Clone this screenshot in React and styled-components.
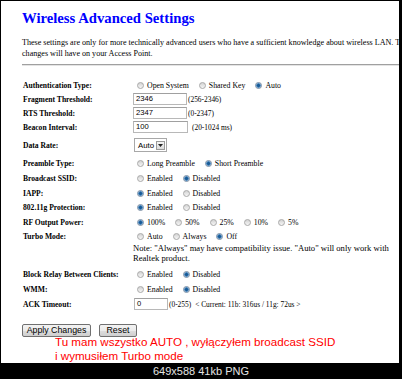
import styled, { createGlobalStyle } from "styled-components"

const Global = createGlobalStyle`
  html, body { margin:0; padding:0; background:#000; }
  body { width:402px; height:379px; overflow:hidden; }
`

function Radio({ on, children }) {
  return (
    <Choice>
      <Dot $on={on} />
      {children}
    </Choice>
  )
}

function App() {
  return (
    <>
      <Global />
      <Screen>
        <Panel>
          <Title>Wireless Advanced Settings</Title>
          <Intro>
            These settings are only for more technically advanced users who have a sufficient knowledge about wireless LAN. This
            <br />
            changes will have on your Access Point.
          </Intro>
          <Rule />
          <Form>
            <Row $h={14}>
              <Label>Authentication Type:</Label>
              <Field>
                <Radio>Open System</Radio>
                <Radio>Shared Key</Radio>
                <Radio on>Auto</Radio>
              </Field>
            </Row>
            <Row $h={14}>
              <Label>Fragment Threshold:</Label>
              <Field>
                <TextBox $w={54}>2346</TextBox>
                <Hint>(256-2346)</Hint>
              </Field>
            </Row>
            <Row $h={14}>
              <Label>RTS Threshold:</Label>
              <Field>
                <TextBox $w={54}>2347</TextBox>
                <Hint>(0-2347)</Hint>
              </Field>
            </Row>
            <Row $h={14}>
              <Label>Beacon Interval:</Label>
              <Field>
                <TextBox $w={55}>100</TextBox>
                <Hint $gap={4}>(20-1024 ms)</Hint>
              </Field>
            </Row>
            <Row $h={22}>
              <Label>Data Rate:</Label>
              <Field>
                <Select>
                  Auto
                  <Arrow>
                    <svg width="5" height="3" viewBox="0 0 5 3">
                      <path d="M0 0H5L2.5 3Z" fill="#222" />
                    </svg>
                  </Arrow>
                </Select>
              </Field>
            </Row>
            <Row $h={14}>
              <Label>Preamble Type:</Label>
              <Field>
                <Radio>Long Preamble</Radio>
                <Radio on>Short Preamble</Radio>
              </Field>
            </Row>
            <Row $h={16}>
              <Label>Broadcast SSID:</Label>
              <Field>
                <Radio>Enabled</Radio>
                <Radio on>Disabled</Radio>
              </Field>
            </Row>
            <Row $h={14}>
              <Label>IAPP:</Label>
              <Field>
                <Radio on>Enabled</Radio>
                <Radio>Disabled</Radio>
              </Field>
            </Row>
            <Row $h={15}>
              <Label>802.11g Protection:</Label>
              <Field>
                <Radio on>Enabled</Radio>
                <Radio>Disabled</Radio>
              </Field>
            </Row>
            <Row $h={14}>
              <Label>RF Output Power:</Label>
              <Field>
                <Radio on>100%</Radio>
                <Radio>50%</Radio>
                <Radio>25%</Radio>
                <Radio>10%</Radio>
                <Radio>5%</Radio>
              </Field>
            </Row>
            <Row $h={14}>
              <Label>Turbo Mode:</Label>
              <Field>
                <Radio>Auto</Radio>
                <Radio>Always</Radio>
                <Radio on>Off</Radio>
              </Field>
            </Row>
            <Row $h={19}>
              <span />
              <Note>
                Note: "Always" may have compatibility issue. "Auto" will only work with
                <br />
                Realtek product.
              </Note>
            </Row>
            <Row $h={15} $top={5}>
              <Label>Block Relay Between Clients:</Label>
              <Field>
                <Radio>Enabled</Radio>
                <Radio on>Disabled</Radio>
              </Field>
            </Row>
            <Row $h={14}>
              <Label>WMM:</Label>
              <Field>
                <Radio>Enabled</Radio>
                <Radio on>Disabled</Radio>
              </Field>
            </Row>
            <Row $h={16}>
              <Label>ACK Timeout:</Label>
              <Field>
                <TextBox $w={34} $left={1}>0</TextBox>
                <Hint $gap={1}>(0-255)</Hint>
                <Hint $gap={4}>&lt; Current: 11b: 316us / 11g: 72us &gt;</Hint>
              </Field>
            </Row>
          </Form>
          <Actions>
            <Button $w={69}>Apply Changes</Button>
            <Button $w={38}>Reset</Button>
          </Actions>
          <Remark>
            Tu mam wszystko AUTO , wyłączyłem broadcast SSID
            <br />
            i wymusiłem Turbo mode
          </Remark>
        </Panel>
        <Caption>649x588 41kb PNG</Caption>
      </Screen>
    </>
  )
}

const Screen = styled.div`
  width:402px;
  height:379px;
  background:#000;
  padding-top:1px;
  box-sizing:border-box;
  display:flex;
  flex-direction:column;
`

const Panel = styled.div`
  margin:0 3px 0 1px;
  height:362px;
  background:#fff;
  overflow:hidden;
  padding-left:21px;
  box-sizing:border-box;
  font-family:"Liberation Serif", "Times New Roman", serif;
  color:#000;
`

const Title = styled.h2`
  margin:8px 0 0;
  font-size:14.7px;
  line-height:18px;
  font-weight:bold;
  color:#0000ff;
  white-space:nowrap;
`

const Intro = styled.p`
  margin:10px 0 0;
  font-size:8.1px;
  line-height:11px;
  white-space:nowrap;
`

const Rule = styled.div`
  height:1px;
  margin-top:5px;
  background:#a0a0a0;
  border-bottom:1px solid #e4e4e4;
`

const Form = styled.div`
  margin:12px 0 0 1px;
  display:flex;
  flex-direction:column;
`

const Row = styled.div`
  display:grid;
  grid-template-columns:110px 1fr;
  align-items:center;
  height:${p => p.$h}px;
  margin-top:${p => p.$top || 0}px;
`

const Label = styled.span`
  font-size:7.6px;
  font-weight:bold;
  white-space:nowrap;
`

const Field = styled.div`
  display:flex;
  align-items:center;
  font-size:7.8px;
  white-space:nowrap;
`

const Choice = styled.span`
  display:inline-flex;
  align-items:center;
  margin-right:6px;
`

const Dot = styled.span`
  width:7px;
  height:7px;
  box-sizing:border-box;
  border-radius:50%;
  border:1px solid ${p => (p.$on ? "#7a8ea5" : "#a9a9a9")};
  margin:0 3px 0 4px;
  background:${p =>
    p.$on
      ? "radial-gradient(circle, #1a5a94 0 1.3px, #4c8dc6 1.6px 2.1px, #e9e9e9 2.5px)"
      : "linear-gradient(#d3d3d3, #f6f6f6)"};
`

const TextBox = styled.div`
  width:${p => p.$w}px;
  height:12px;
  box-sizing:border-box;
  margin-left:${p => p.$left || 0}px;
  border:1px solid #b8b8b8;
  border-top-color:#a0a0a0;
  padding-left:2px;
  font-family:"Liberation Sans", Arial, sans-serif;
  font-size:7.6px;
  line-height:10px;
`

const Hint = styled.span`
  margin-left:${p => p.$gap || 1}px;
  font-size:7.4px;
`

const Select = styled.div`
  display:flex;
  align-items:center;
  justify-content:space-between;
  width:33px;
  height:14px;
  margin-left:1px;
  box-sizing:border-box;
  border:1px solid #a8a8a8;
  padding:0 1px 0 3px;
  font-family:"Liberation Sans", Arial, sans-serif;
  font-size:7.8px;
`

const Arrow = styled.span`
  display:flex;
  align-items:center;
  justify-content:center;
  width:9px;
  height:9px;
  box-sizing:border-box;
  border:1px solid #9a9a9a;
  background:linear-gradient(#f4f4f4, #dcdcdc);
`

const Note = styled.div`
  font-size:8.6px;
  line-height:10px;
  white-space:nowrap;
`

const Actions = styled.div`
  display:flex;
  gap:8px;
  margin-top:12px;
`

const Button = styled.button`
  width:${p => p.$w}px;
  height:13px;
  padding:0;
  border:1px solid #707070;
  border-radius:2px;
  background:linear-gradient(#f3f3f3 0%, #ebebeb 50%, #dddddd 51%, #cfcfcf 100%);
  font-family:"Liberation Sans", Arial, sans-serif;
  font-size:8.8px;
  line-height:11px;
  color:#000;
`

const Remark = styled.p`
  margin:-2px 0 0 33px;
  font-family:"Liberation Sans", Arial, sans-serif;
  font-size:11.6px;
  line-height:13.5px;
  color:#f00;
  white-space:nowrap;
`

const Caption = styled.div`
  height:16px;
  display:flex;
  align-items:center;
  justify-content:center;
  font-family:"Liberation Sans", Arial, sans-serif;
  font-size:11px;
  color:#e4e4e4;
`

export default App
